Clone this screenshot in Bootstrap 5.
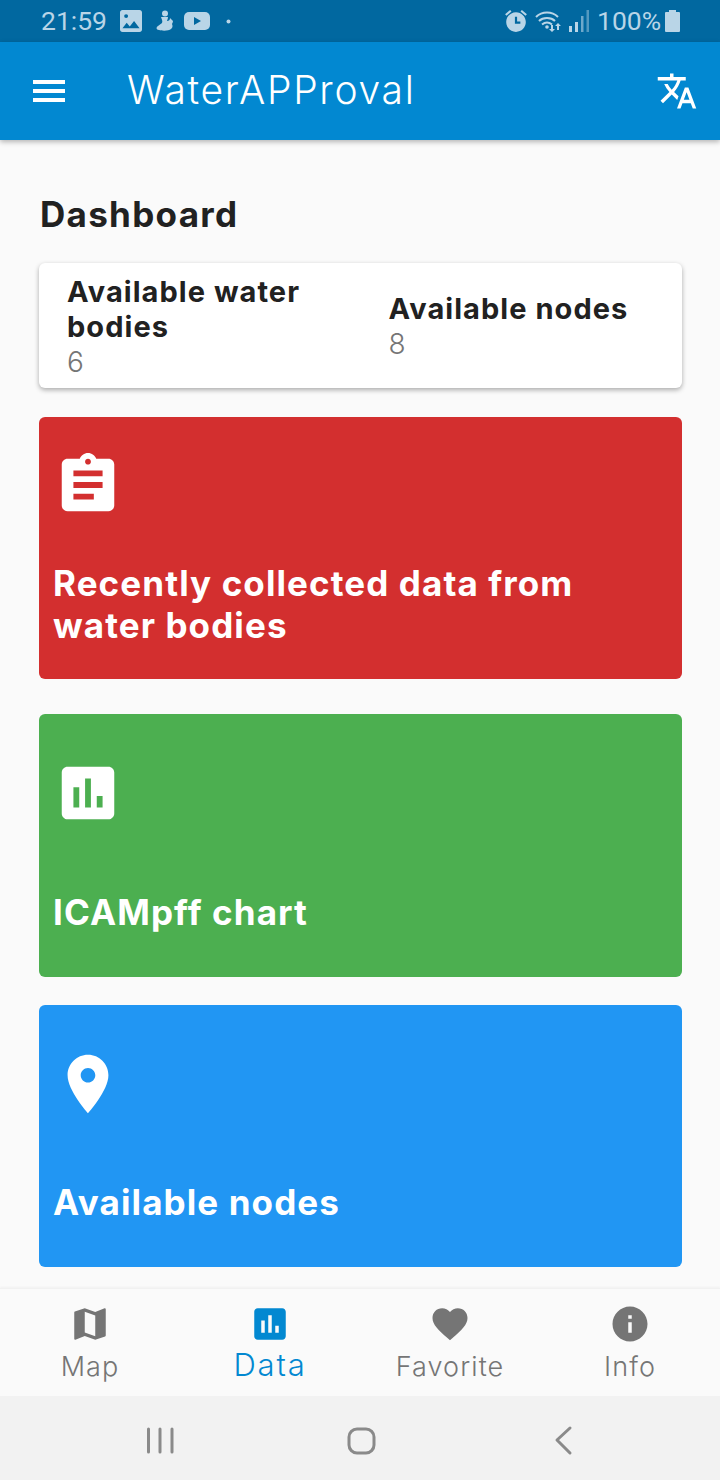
<!DOCTYPE html>
<html lang="en"><head><meta charset="utf-8"><title>WaterAPProval</title>
<link href="https://cdn.jsdelivr.net/npm/bootstrap@5.3.0/dist/css/bootstrap.min.css" rel="stylesheet">
<style>
html,body{height:100%;overflow:hidden}
body{background:#fafafa;font-family:Inter,"Liberation Sans",sans-serif;color:#212121}
.phone{height:1480px;width:720px}
.status-strip{height:42px;background:#0168a0;color:#b9d5e7;font-family:Roboto,sans-serif;font-size:26.500px;line-height:42px;padding:0 40px 0 41px}
.status-strip svg{fill:#b9d5e7;display:block}
.s-time{width:79px}.s-img{width:35px}.s-fig{width:29px}.s-yt{width:38px}
.s-alarm{margin-right:7px}.s-wifi{margin-right:8px}.s-sig{margin-right:8px}.s-pct{width:68px}
.app-head{height:98px;background:#0288d1;padding:0 22px 0 33px;box-shadow:0 2px 5px rgba(0,0,0,.28);z-index:2;flex-wrap:nowrap}
.app-title{font-size:39px;font-weight:300;color:#fff;margin:-2px 0 0 62px;padding:0;letter-spacing:1.700px}
.app-head svg{fill:#fff;display:block}
.main-area{padding:0 38px 0 39px}
.dash-title{font-size:35px;font-weight:700;color:#212121;margin:55px 0 30px 1px;line-height:38px;letter-spacing:1.300px}
.count-card{height:125px;border:0;border-radius:6px;box-shadow:0 2px 5px rgba(0,0,0,.32);margin-bottom:29px;background:#fff}
.count-card .row{height:125px;padding-top:2px}
.c-left{padding-left:28px}.c-right{padding-left:28px}
.c-label{font-size:29px;font-weight:700;line-height:35px;letter-spacing:1.050px;color:#212121}
.c-val{font-size:28px;font-weight:300;line-height:35px;color:#757575;margin-top:1px}
.tile{height:262px;border:0;border-radius:6px;padding:0 14px;color:#fff;justify-content:center}
.tile svg{fill:#fff;display:block;width:70px;height:70px;margin-left:0}
.tile-t{font-size:35px;font-weight:700;line-height:42px;letter-spacing:1.100px}
.t-red{background:#d32f2f;margin-bottom:35px}.t-red .tile-t{margin-top:42px}
.t-green{background:#4caf50;height:263px;margin-bottom:28px}.t-green .tile-t{margin-top:63px}
.t-blue{background:#2196f3}.t-blue .tile-t{margin-top:62px}
.bottom-tabs{height:108px;background:#fafafa;border-top:1px solid #f1f1f1;box-shadow:0 -1px 2px rgba(0,0,0,.04)}
.tab-it{color:#757575;font-size:27px;font-weight:300;line-height:32px;text-align:center;padding-top:14px}
.tab-it svg{fill:#757575;display:block;margin:0 auto;width:42px;height:42px}
.tab-it span{display:block;margin-top:6px;letter-spacing:1.100px}
.tab-on{color:#0288d1;font-size:31px}
.tab-on svg{fill:#0288d1}
.tab-on span{margin-top:4px;letter-spacing:1.800px}
.sys-nav{height:84px;background:#f2f2f2}
.sys-nav svg{display:block}
</style></head>
<body>
<div class="phone d-flex flex-column">
 <div class="status-strip d-flex align-items-center">
  <div class="s-time">21:59</div>
  <div class="s-img"><svg width="22" height="22" viewBox="3 3 18 18"><path d="M21 19V5c0-1.100-.9-2-2-2H5c-1.100 0-2 .9-2 2v14c0 1.100.9 2 2 2h14c1.100 0 2-.9 2-2zM8.500 13.500l2.500 3 3.500-4.500 4.500 6H5l3.500-4.500z"/><circle cx="8" cy="8" r="1.600" fill="#0168a0"/></svg></div>
  <div class="s-fig"><svg width="19" height="22" viewBox="0 0 19 22"><circle cx="10" cy="3.500" r="3"/><path d="M6 7h7c0 2-1 3-1 4 2 0 3-1 3-3l3 3c0 1-.5 2-1 3 1 2 .5 4-1 5-2 2-9 2-12 1-3 0-3-3-1-4l4-3c1-2-.5-4-1-6z"/></svg></div>
  <div class="s-yt"><svg width="26" height="18" viewBox="0 0 26 18"><rect width="26" height="18" rx="5"/><path d="M10 5l7 4-7 4z" fill="#0168a0"/></svg></div>
  <div class="ms-1"><svg width="5" height="5" viewBox="0 0 5 5"><circle cx="2.500" cy="2.500" r="2"/></svg></div>
  <div class="ms-auto s-alarm"><svg width="24" height="24" viewBox="1 1 22 22"><path d="M22 5.720l-4.600-3.860-1.290 1.530 4.600 3.860L22 5.720zM7.880 3.390L6.600 1.860 2 5.710l1.290 1.530 4.590-3.850zM12 4c-4.970 0-9 4.030-9 9s4.020 9 9 9c4.970 0 9-4.030 9-9s-4.030-9-9-9z"/><path d="M12 8v5.500h4" stroke="#0168a0" stroke-width="2" fill="none"/></svg></div>
  <div class="s-wifi"><svg width="26" height="22" viewBox="0 0 26 22"><path d="M1 7c6-6 16-6 22 0M4 11c4-4 12-4 16 0M7 14.500c3-2.500 7-2.500 10 0" stroke="#b9d5e7" stroke-width="2" fill="none"/><circle cx="12" cy="17" r="1.800"/><path d="M16 15h2v4h2l-3 3-3-3h2zM23 13l3 3h-2v4h-2v-4h-2z"/></svg></div>
  <div class="s-sig"><svg width="20" height="22" viewBox="0 0 20 22"><rect x="0" y="16" width="3" height="6"/><rect x="6" y="12" width="3" height="10"/><rect x="12" y="6" width="2.500" height="16" opacity=".6"/><rect x="17.500" y="0" width="2.500" height="22" opacity=".45"/></svg></div>
  <div class="s-pct">100%</div>
  <div><svg width="15" height="22" viewBox="0 0 15 22"><path d="M4 0h7v2h3a1 1 0 0 1 1 1v18a1 1 0 0 1-1 1H1a1 1 0 0 1-1-1V3a1 1 0 0 1 1-1h3z"/></svg></div>
 </div>
 <nav class="navbar app-head">
  <svg width="32" height="22" viewBox="0 0 32 22"><path d="M0 0h32v4H0zM0 9h32v4H0zM0 18h32v4H0z"/></svg>
  <span class="navbar-brand app-title me-auto">WaterAPProval</span>
  <svg width="42" height="42" viewBox="0 0 24 24"><path d="M12.870 15.070l-2.540-2.510.03-.03c1.740-1.940 2.980-4.170 3.710-6.530H17V4h-7V2H8v2H1v1.990h11.170C11.500 7.920 10.440 9.750 9 11.350 8.070 10.320 7.300 9.190 6.690 8h-2c.73 1.630 1.730 3.170 2.980 4.560l-5.090 5.020L4 19l5-5 3.110 3.110.76-2.040zM18.500 10h-2L12 22h2l1.120-3h4.750L21 22h2l-4.500-12zm-2.620 7l1.620-4.330L19.120 17h-3.240z"/></svg>
 </nav>
 <main class="main-area flex-grow-1">
  <h1 class="dash-title">Dashboard</h1>
  <div class="card count-card">
   <div class="row g-0 align-items-center">
    <div class="col-6 c-left"><div class="c-label">Available water bodies</div><div class="c-val">6</div></div>
    <div class="col-6 c-right"><div class="c-label">Available nodes</div><div class="c-val">8</div></div>
   </div>
  </div>
  <div class="card tile t-red">
   <svg viewBox="0 0 24 24"><path d="M19 3h-4.180C14.400 1.840 13.300 1 12 1c-1.300 0-2.400.84-2.820 2H5c-1.100 0-2 .9-2 2v14c0 1.100.9 2 2 2h14c1.100 0 2-.9 2-2V5c0-1.100-.9-2-2-2zm-7 0c.55 0 1 .45 1 1s-.45 1-1 1-1-.45-1-1 .45-1 1-1zm2 14H7v-2h7v2zm3-4H7v-2h10v2zm0-4H7V7h10v2z"/></svg>
   <div class="tile-t">Recently collected data from<br>water bodies</div>
  </div>
  <div class="card tile t-green">
   <svg viewBox="0 0 24 24"><path d="M19 3H5c-1.100 0-2 .9-2 2v14c0 1.100.9 2 2 2h14c1.100 0 2-.9 2-2V5c0-1.100-.9-2-2-2zM9 17H7v-7h2v7zm4 0h-2V7h2v10zm4 0h-2v-4h2v4z"/></svg>
   <div class="tile-t">ICAMpff chart</div>
  </div>
  <div class="card tile t-blue">
   <svg viewBox="0 0 24 24"><path d="M12 2C8.130 2 5 5.130 5 9c0 5.250 7 13 7 13s7-7.750 7-13c0-3.870-3.130-7-7-7zm0 9.500c-1.380 0-2.500-1.120-2.500-2.500s1.120-2.500 2.500-2.500 2.500 1.120 2.500 2.500-1.120 2.500-2.500 2.500z"/></svg>
   <div class="tile-t">Available nodes</div>
  </div>
 </main>
 <div class="bottom-tabs row g-0">
  <div class="col-3 tab-it"><svg viewBox="0 0 24 24"><path d="M20.500 3l-.16.03L15 5.100 9 3 3.360 4.900c-.21.07-.36.25-.36.48V20.500c0 .28.22.5.5.5l.16-.03L9 18.900l6 2.100 5.640-1.900c.21-.07.36-.25.36-.48V3.500c0-.28-.22-.5-.5-.5zM15 19l-6-2.110V5l6 2.110V19z"/></svg><span>Map</span></div>
  <div class="col-3 tab-it tab-on"><svg viewBox="0 0 24 24"><path d="M19 3H5c-1.100 0-2 .9-2 2v14c0 1.100.9 2 2 2h14c1.100 0 2-.9 2-2V5c0-1.100-.9-2-2-2zM9 17H7v-7h2v7zm4 0h-2V7h2v10zm4 0h-2v-4h2v4z"/></svg><span>Data</span></div>
  <div class="col-3 tab-it"><svg viewBox="0 0 24 24"><path d="M12 21.350l-1.450-1.320C5.400 15.360 2 12.280 2 8.500 2 5.420 4.420 3 7.500 3c1.740 0 3.410.81 4.500 2.090C13.090 3.810 14.760 3 16.500 3 19.580 3 22 5.420 22 8.500c0 3.780-3.400 6.860-8.550 11.540L12 21.350z"/></svg><span>Favorite</span></div>
  <div class="col-3 tab-it"><svg viewBox="0 0 24 24"><path d="M12 2C6.480 2 2 6.480 2 12s4.480 10 10 10 10-4.480 10-10S17.520 2 12 2zm1 15h-2v-6h2v6zm0-8h-2V7h2v2z"/></svg><span>Info</span></div>
 </div>
 <div class="sys-nav">
  <svg width="720" height="84" viewBox="0 0 720 84" fill="none" stroke="#8a8a8a" stroke-width="3" stroke-linecap="round" stroke-linejoin="round"><path d="M148.500 33v23M160 33v23M172 33v23"/><rect x="349" y="33" width="25" height="24" rx="8"/><path d="M570 32l-13 12 13 13"/></svg>
 </div>
</div>
</body></html>
